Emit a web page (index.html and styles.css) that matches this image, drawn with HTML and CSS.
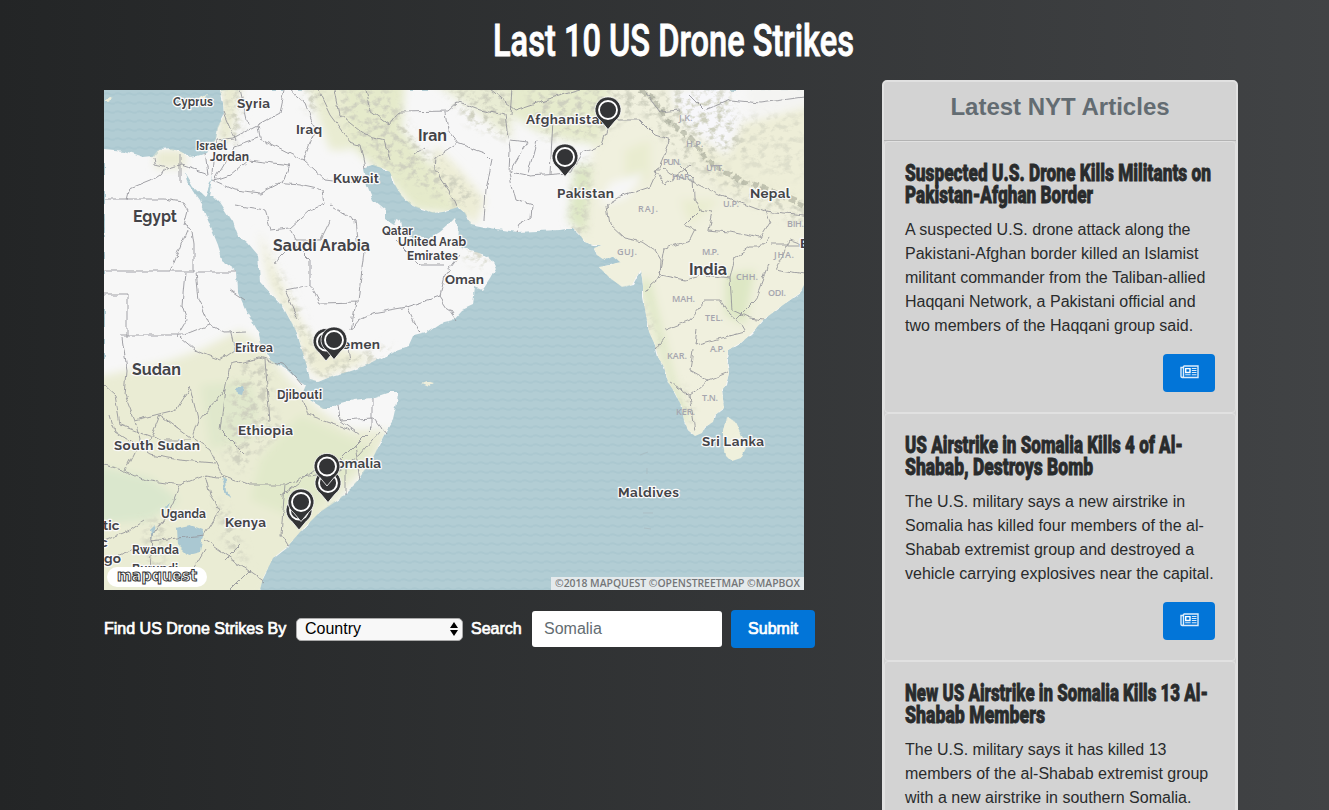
FILE: index.html
```html
<!DOCTYPE html>
<html lang="en">
<head>
<meta charset="utf-8">
<title>Last 10 US Drone Strikes</title>
<link rel="stylesheet" href="styles.css">
</head>
<body>
<header class="page-header">
  <h1 class="page-title"><svg width="362" height="56"><text x="0" y="41" textLength="361" lengthAdjust="spacingAndGlyphs">Last 10 US Drone Strikes</text></svg></h1>
</header>
<div class="layout">
<main class="main">
  <svg class="map" viewBox="104 90 700 500" width="700" height="500">
    <defs>
      <pattern id="waves" x="104" y="90" width="11" height="9" patternUnits="userSpaceOnUse">
        <rect width="11" height="9" fill="#b2cdd4"/>
        <path d="M0 4q2.7-1.600 5.500 0t5.500 0" fill="none" stroke="#abc8d0" stroke-width="2"/>
      </pattern>
      <path id="mainland" d="M104 149L125 151 143 157 153 156 158 150 172 149 182 152 187 156 197 155 207 152 215 140 217 128 224 115 223 102 220 90H804V285L800 293 783 305 763 320 752 333 742 342 728 350 727 360 729 373 726 385 722 390 724 408 715 415 713 422 705 427 702 433 695 436 688 430 684 420 682 407 675 393 668 382 664 367 658 357 655 345 649 332 643 298 643 285 641 270 636 277 632 285 622 287 610 278 599 267 610 265 620 261 607 262 597 255 594 248 602 245 593 245 585 242 580 235 573 228 560 230 537 231 517 232 490 228 470 224 465 213 458 207 443 212 433 213 413 206 402 197 395 185 390 172 382 168 372 165 363 168 367 185 373 200 385 210 385 220 393 225 395 218 400 220 402 232 410 238 430 238 440 232 448 225 455 218 458 227 457 242 463 248 477 252 488 255 492 263 496 267 490 278 482 290 475 287 473 305 462 310 453 320 440 323 425 333 413 336 408 347 390 353 373 362 360 368 345 373 330 377 318 382 310 380 307 367 302 350 297 333 282 305 260 282 258 255 247 242 238 235 233 222 220 202 213 195 209 195 213 175 205 197 194 187 185 172 187 182 200 200 207 218 218 245 223 262 237 272 238 292 247 313 258 332 262 347 270 360 287 370 300 382 306 386 302 395 313 402 323 408 333 408 338 404 353 400 372 398 390 392 398 392 397 402 393 420 383 437 373 458 357 482 340 499 320 512 300 532 287 547 273 558 263 578 260 590H104Z"/>
      <path id="lanka" d="M727 417L735 421 741 434 746 448 741 458 732 461 726 455 724 442 724 430Z"/>
      <clipPath id="land"><use href="#mainland"/><use href="#lanka"/></clipPath>
      <filter id="soft" x="-30%" y="-30%" width="160%" height="160%"><feGaussianBlur stdDeviation="4"/></filter>
      <filter id="rough" x="104" y="90" width="700" height="500" filterUnits="userSpaceOnUse">
        <feTurbulence type="fractalNoise" baseFrequency=".1" numOctaves="2" seed="4"/>
        <feDisplacementMap in="SourceGraphic" scale="6" xChannelSelector="R" yChannelSelector="G"/>
      </filter>
      <filter id="relief" x="104" y="90" width="700" height="500" filterUnits="userSpaceOnUse">
        <feGaussianBlur in="SourceGraphic" stdDeviation="4" result="area"/>
        <feTurbulence type="fractalNoise" baseFrequency=".12 .16" numOctaves="4" seed="9"/>
        <feColorMatrix values="0 0 0 0 .62  0 0 0 0 .63  0 0 0 0 .52  4 0 0 0 -1.850"/>
        <feComposite in2="area" operator="in"/>
      </filter>
      <g id="pin">
        <path d="M0 19.500L-7.500 10.500A13 13 0 1 1 7.500 10.500Z" fill="#333436" stroke="#fff" stroke-width=".8"/>
        <circle r="9" fill="#333436" stroke="#fff" stroke-width="1.900"/>
      </g>
    </defs>
    <rect x="104" y="90" width="700" height="500" fill="url(#waves)"/>
    <g filter="url(#rough)">
      <g fill="#f7f7f7"><use href="#mainland"/></g>
      <use href="#lanka" fill="#eff0dc"/>
      <path d="M422 384l5-2 7 2-5 3zM186 98l10 1 11-6-5 9-10 4zM104 101l6-4 4 1-7 4z" fill="#eeeedb"/>
    </g>
    <g clip-path="url(#land)">
      <g filter="url(#soft)" fill="#ededd6">
        <path d="M590 80H690L720 150 814 165V340L700 450H640L635 290 590 290 575 235 595 140Z" fill="#f0f0de"/>
        <path d="M690 150L735 125 814 105V215L720 190Z" fill="#eeeed8"/>
        <path d="M505 80H610L600 145 565 140 535 130 512 115Z" fill="#e6ebcd"/>
        <path d="M325 80H405L402 130 450 190 470 215 415 210 385 175 355 150 335 125Z" fill="#e5eacb"/>
        <path d="M430 80H510L512 140 480 115Z" fill="#e9ecd4"/>
        <path d="M435 145L460 170 485 200 475 225 450 200 432 170Z"/>
        <path d="M305 80H345L350 150 330 150Z" fill="#e9ecd2"/>
        <path d="M155 150H185V168H155ZM222 80L242 80 232 140 218 145Z" fill="#eaebd3"/>
        <path d="M258 230L280 280 300 320 320 350 310 375 295 330 270 285Z"/>
        <path d="M300 345L330 345 375 358 318 380Z"/>
        <path d="M94 378L165 362 200 350 240 330 262 345 285 375 320 410 350 430 390 430 380 450 300 545 260 600H94Z" fill="#eaecd4"/>
        <path d="M94 465L150 478 180 500 150 520 94 525Z" fill="#dae7cd"/>
        <path d="M200 385L250 380 260 410 250 440 210 450Z" fill="#e0e8cc"/>
        <path d="M300 415L375 450 300 520 250 500 260 460Z" fill="#e1e9ca"/>
        <path d="M575 165L592 165 585 235 568 220ZM640 280H650L675 380 690 420H680ZM725 275L755 270 745 325 725 315Z" fill="#dde7c4"/>
        <path d="M625 150L650 140 650 180 625 185ZM680 200H720L690 225Z" fill="#e9ecd0"/>
        <path d="M610 183L645 172 625 198 600 205Z" fill="#f7f7f7"/>
        <path d="M670 90L722 85 740 125 727 155 707 142 682 122Z" fill="#f7f7fa"/>
        <path d="M745 85H814V105L750 115Z" fill="#f4f4f2"/>
      </g>
      <g filter="url(#relief)" fill="#000">
        <path d="M525 90H655L700 155 760 190 804 200V225L735 195 680 160 640 110 600 135 545 140ZM660 90H730L745 155 715 160 680 135ZM725 180L804 200V218L735 198Z"/>
        <path d="M335 90H390L410 130 470 215 455 208 380 165 340 120ZM445 90H510V140L470 125ZM430 150L480 200 470 205 435 185Z"/>
        <path d="M575 160H592L585 235H570ZM230 110H245L235 145H222ZM262 240L300 310 318 360 308 372 295 325ZM245 360L270 365 272 410 285 430 255 455 240 475 225 455 230 395ZM310 370L390 345V353L325 380ZM145 520H165V580H145ZM215 500L230 510 250 570 225 545Z"/>
        <path d="M460 245L490 257 485 270 465 258ZM680 380L692 405V430L682 405ZM225 90H240V110H225ZM305 90H325V110H305ZM645 300L660 350 654 355 644 320Z"/>
        <path d="M740 115H804V180L740 170Z" opacity=".5"/>
      </g>
      <path d="M640 90L655 100 668 122 690 138 712 165 740 180 770 190 804 205" fill="none" stroke="#8f9282" stroke-opacity=".45" stroke-width="5" filter="url(#rough)" stroke-dasharray="7 3"/>
    </g>
    <g class="lakes" filter="url(#rough)">
      <path d="M177 528L190 525 204 530 200 552 188 555 178 545ZM222 478L226 480 227 492 231 499 226 496ZM236 388L243 387 241 394 237 393ZM150 530L155 525 152 540ZM165 508L170 502 168 508ZM600 262L612 256 619 262 609 264Z"/>
    </g>
    <g class="borders" filter="url(#rough)" fill="none">
      <path d="M104 199H164L183 202 188 210 184 225 192 230 194 245V271M104 271H194M196 272H237" />
      <path d="M104 295H127V337M185 272L182 305 187 320 177 337M187 230L170 271M196 272L199 300 210 325 225 333 247 332M120 335H185L210 325M127 200L130 188 150 180 168 168 181 165 208 174 205 152M180 155V182M154 158L155 165 168 168"/>
      <path d="M213 174L216 140 233 138 258 125 280 113 285 90M258 125L260 138 303 160 325 180 350 183 365 178M258 138L235 146 215 180 230 175 248 160 290 165 285 180 260 193 235 190 213 180"/>
      <path d="M224 112L236 140M240 90L248 125M290 90L305 103 315 130 303 160M318 90L330 115 350 142 360 145 365 168M335 90L340 115 365 135 385 140 390 160M365 90L370 110 390 125 400 112 448 111 458 102 480 110 505 115 510 150 509 173 516 200 532 205 531 218 519 225 516 232"/>
      <path d="M445 112L448 130 457 143 485 153 492 160 486 190 484 220M457 143L436 157 435 170 452 195 457 207M415 155L425 148M510 140L528 142 510 172 530 176 570 173 583 153 602 145 610 120 640 120 655 135 670 140 662 160 650 187 620 197 607 205 610 225 624 238 643 242 655 250 661 260 660 277 650 285 646 292M537 140L528 173M553 120L550 174M512 90L510 115M490 90L515 110 545 100 580 90"/>
      <path d="M235 205L265 210 271 230 290 228 310 210 325 205 323 190 300 185 275 183M290 230L295 240 320 240 330 220M295 245L310 260 310 285 320 303 358 302 364 250M290 245L280 255 275 265M355 302L350 330 358 320 372 313 407 307 440 296 445 275 460 255M407 307L419 333M440 296L456 320M445 265H420L395 240M330 205L355 220 358 250M310 285L285 290 298 320"/>
      <path d="M122 337L127 370 125 395 135 420 175 410 188 390 190 387 198 420 192 437 210 450 222 475 250 485 285 485 300 478 340 470 360 455 380 432M180 337L195 350 220 360 235 350 230 330M200 420L225 390 230 365 260 358 285 365 302 385M265 360L270 422M225 390L220 430 245 455M104 385L115 395 120 425 160 440 190 440M104 465L122 470 145 480 180 485 205 475 225 478M110 415L115 432 150 455 180 460 215 463M125 470L140 440 135 420M190 437L160 415 150 440M205 475L210 495 220 510 204 535 150 541M180 485L170 510 152 535 150 575M204 540L265 582M285 485L281 535 288 546M302 396L308 415 350 430M338 404L340 420 360 435M372 398V428L330 470M340 420L374 418M374 418L386 434"/>
      <path d="M662 168L670 175 690 180 720 195 765 212 804 216M660 170L655 170 665 185 690 165M680 165L693 178 694 198 700 210 712 212 708 230 730 232 760 238 770 222 765 210M770 245H804M700 210L685 225 695 230 690 240 665 248 660 275 685 280 705 275 730 278 735 258 750 247 760 247 770 235M665 330L690 320 705 300 720 300 730 315 742 325 745 330M730 278L732 310 750 318 763 320M768 265L755 300 735 320M665 338L655 350M697 330L695 345 745 332M693 350L690 370 708 380 697 390 690 395 670 383M708 380L728 372M690 395L695 432M804 245L790 240 775 270 804 275M645 92L660 112 680 110M690 95L705 110 730 100 760 103 804 97"/>
      <path d="M230 290L245 300M240 545L225 560M205 550L190 575M250 570L230 590M104 540L130 530 145 520M110 560L145 545M350 360L345 330M419 333L418 330M345 468V495M355 445L360 480M282 495L315 470"/>
    </g>
    <g class="regions">
      <text x="663" y="165" textLength="18">PUN.</text><text x="672" y="180" textLength="20">HAR.</text><text x="706" y="171" textLength="18">UTT.</text><text x="679" y="121">J.K.</text><text x="686" y="147">H.P.</text><text x="638" y="212" textLength="20">RAJ.</text><text x="723" y="207" textLength="16">U.P.</text><text x="787" y="227" textLength="17">BIH.</text><text x="617" y="255" textLength="20">GUJ.</text><text x="702" y="255" textLength="17">M.P.</text><text x="774" y="258" textLength="20">JHA.</text><text x="736" y="280" textLength="22">CHH.</text><text x="768" y="296" textLength="18">ODI.</text><text x="672" y="302" textLength="23">MAH.</text><text x="705" y="321" textLength="18">TEL.</text><text x="667" y="359" textLength="20">KAR.</text><text x="710" y="352" textLength="15">A.P.</text><text x="702" y="401" textLength="16">T.N.</text><text x="676" y="415" textLength="19">KER.</text>
    </g>
    <g class="countries">
      <g class="small">
        <text x="173" y="106" textLength="40">Cyprus</text><text x="196" y="150" textLength="31">Israel</text><text x="210" y="161" textLength="39">Jordan</text><text x="382" y="235" textLength="31">Qatar</text><text x="398" y="246" textLength="68">United Arab</text><text x="407" y="260" textLength="51">Emirates</text><text x="235" y="352" textLength="38">Eritrea</text><text x="277" y="399" textLength="45">Djibouti</text><text x="161" y="518" textLength="45">Uganda</text><text x="132" y="554" textLength="47">Rwanda</text><text x="132" y="573" textLength="46">Burundi</text>
      </g>
      <text x="237" y="108" textLength="33">Syria</text><text x="296" y="134" textLength="26">Iraq</text><text x="333" y="183" textLength="46">Kuwait</text><text x="526" y="124" textLength="82">Afghanistan</text><text x="557" y="198" textLength="57">Pakistan</text><text x="750" y="198" textLength="40">Nepal</text><text x="445" y="284" textLength="39">Oman</text><text x="334" y="349" textLength="46">Yemen</text><text x="238" y="435" textLength="55">Ethiopia</text><text x="114" y="450" textLength="86">South Sudan</text><text x="328" y="468" textLength="53">Somalia</text><text x="225" y="527" textLength="41">Kenya</text><text x="702" y="446" textLength="62">Sri Lanka</text><text x="618" y="497" textLength="61">Maldives</text><text x="103" y="530">tic</text><text x="100" y="547">c</text><text x="104" y="563" textLength="17">go</text><text x="800" y="248">B</text>
      <g class="large"><text x="418" y="141" textLength="29">Iran</text><text x="133" y="222" textLength="44">Egypt</text><text x="273" y="251" textLength="97">Saudi Arabia</text><text x="689" y="275" textLength="38">India</text><text x="132" y="375" textLength="49">Sudan</text></g>
    </g>
    <path d="M640 455l8-3M647 468v6M643 513h10M644 528l7 1" stroke="#a9b9bf" stroke-width=".7"/>
    <use href="#pin" x="608" y="110"/><use href="#pin" x="565" y="157"/>
    <use href="#pin" x="326" y="341.500"/><use href="#pin" x="334" y="340"/>
    <use href="#pin" x="328" y="483"/><use href="#pin" x="327" y="466.500"/>
    <use href="#pin" x="299" y="510.500"/><use href="#pin" x="301" y="502"/>
    <rect x="107" y="567" width="100" height="20" rx="10" fill="#fff"/>
    <text class="brand" x="117" y="581" textLength="80" lengthAdjust="spacingAndGlyphs">mapquest</text>
    <rect x="551" y="577" width="253" height="13" fill="#e7ebed" fill-opacity=".95"/>
    <text class="credit" x="555" y="587" textLength="245" lengthAdjust="spacingAndGlyphs">©2018 MAPQUEST ©OPENSTREETMAP ©MAPBOX</text>
  </svg>
  <form class="search">
    <span class="label label-by">Find US Drone Strikes By</span>
    <span class="select" role="listbox">Country
      <svg width="8" height="14" viewBox="0 0 8 14"><path d="M0 6L4 0 8 6ZM0 8H8L4 14Z" fill="#000"/></svg>
    </span>
    <span class="label label-search">Search</span>
    <input class="query" type="text" placeholder="Somalia">
    <button class="submit" type="button">Submit</button>
  </form>
</main>
<aside class="articles">
  <h2 class="articles-title">Latest NYT Articles</h2>
  <svg class="sprite" width="0" height="0"><symbol id="news" viewBox="0 0 19 14"><path d="M3.500 1H18V12.500H2.200Q1 12.500 1 11V2.500H3.500M3.500 1V11Q3.500 12.500 2.200 12.500" fill="none" stroke="#dcecfa" stroke-width="1.400"/><path d="M5.700 3.600H10V7.500H5.700Z" fill="none" stroke="#fff" stroke-width="1.400"/><path d="M11.800 3.500H16.500M11.800 5.500H16.500M11.800 7.500H16.500M5.200 9.700H10.600M11.800 9.700H16.500" stroke="#dcecfa" stroke-width="1.100"/></symbol></svg>
  <article class="card">
    <h3 class="card-title"><svg width="312" height="44"><text x="0" y="18" textLength="306" lengthAdjust="spacingAndGlyphs">Suspected U.S. Drone Kills Militants on</text><text x="0" y="40" textLength="188" lengthAdjust="spacingAndGlyphs">Pakistan-Afghan Border</text></svg></h3>
    <p class="summary">A suspected U.S. drone attack along the<br>Pakistani-Afghan border killed an Islamist<br>militant commander from the Taliban-allied<br>Haqqani Network, a Pakistani official and<br>two members of the Haqqani group said.</p>
    <a class="read"><svg width="19" height="14"><use href="#news"/></svg></a>
  </article>
  <article class="card">
    <h3 class="card-title"><svg width="312" height="44"><text x="0" y="18" textLength="278" lengthAdjust="spacingAndGlyphs">US Airstrike in Somalia Kills 4 of Al-</text><text x="0" y="40" textLength="188" lengthAdjust="spacingAndGlyphs">Shabab, Destroys Bomb</text></svg></h3>
    <p class="summary">The U.S. military says a new airstrike in<br>Somalia has killed four members of the al-<br>Shabab extremist group and destroyed a<br>vehicle carrying explosives near the capital.</p>
    <a class="read"><svg width="19" height="14"><use href="#news"/></svg></a>
  </article>
  <article class="card">
    <h3 class="card-title"><svg width="312" height="44"><text x="0" y="18" textLength="303" lengthAdjust="spacingAndGlyphs">New US Airstrike in Somalia Kills 13 Al-</text><text x="0" y="40" textLength="140" lengthAdjust="spacingAndGlyphs">Shabab Members</text></svg></h3>
    <p class="summary">The U.S. military says it has killed 13<br>members of the al-Shabab extremist group<br>with a new airstrike in southern Somalia.</p>
  </article>
</aside>
</div>
</body>
</html>
```
FILE: styles.css
```css
* { box-sizing: border-box; }
html { height: 100%; overflow: hidden; }
body {
  margin: 0;
  height: 100%;
  overflow: hidden;
  font: 16px/24px "Liberation Sans", Arial, sans-serif;
  color: #292b2c;
  background: linear-gradient(to right, #232526, #414345);
}
svg { display: block; }
svg text { white-space: pre; }
.page-header { height: 80px; padding: 15px 0 0 493px; }
.page-title { margin: 0; font: 500 44.5px Roboto, sans-serif; }
.page-title svg { overflow: visible; }
.page-title text { fill: #fff; stroke: #fff; stroke-width: .9px; }
.layout { display: flex; align-items: flex-start; padding-left: 104px; }
.main { width: 778px; padding-top: 10px; flex: none; }
.map { overflow: hidden; }
.lakes { fill: #aac8d2; }
.borders { stroke: #929298; stroke-width: .85; stroke-linejoin: round; }
.regions { font: 600 9px "Open Sans", sans-serif; fill: #a5a5ae; }
.countries {
  font: 700 13.5px Raleway, Lato, sans-serif;
  fill: #444448;
  stroke: #fafafa;
  stroke-width: 2.5px;
  stroke-linejoin: round;
  paint-order: stroke;
}
.small { font-size: 12px; }
.large { font-size: 16px; }
.brand { font: 700 15px "DejaVu Sans", sans-serif; fill: #fff; stroke: #333; stroke-width: 1px; }
.credit { font: 600 10px "Open Sans", sans-serif; fill: #747678; }
.search { display: flex; align-items: center; height: 38px; margin-top: 20px; }
.label { color: #fff; -webkit-text-stroke: .7px #fff; white-space: nowrap; flex: none; }
.label-by { width: 192px; }
.label-search { width: 61px; margin-left: 8px; }
.select {
  display: flex;
  align-items: center;
  justify-content: space-between;
  width: 167px;
  height: 23px;
  padding: 0 4px 0 8px;
  border: 1px solid #aaa;
  border-radius: 5px;
  background: #f8f8f8;
  color: #000;
}
.query {
  width: 190px;
  height: 36px;
  padding: 0 12px;
  border: 0;
  border-radius: 3px;
  background: #fff;
  font: inherit;
}
.query::placeholder { color: #636c72; opacity: 1; }
.submit {
  width: 84px;
  height: 38px;
  margin-left: 9px;
  padding: 0;
  border: 0;
  border-radius: 4px;
  background: #0275d8;
  color: #fff;
  font: inherit;
  -webkit-text-stroke: .7px #fff;
}
.articles { width: 356px; flex: none; border: 2px solid #e1e1e1; border-radius: 5px; background: #d3d3d3; }
.articles-title {
  height: 59px;
  margin: 0;
  padding-top: 10px;
  border-bottom: 1px solid #b3b3b3;
  color: #636c72;
  font-size: 24px;
  line-height: 29px;
  text-align: center;
}
.sprite { position: absolute; }
.card { padding: 21px 20px 20px; border: 1px solid #e1e1e1; border-radius: 4px; }
.card-title { margin: 0 0 11px; font: 900 24px Roboto, sans-serif; }
.card-title svg { overflow: visible; }
.card-title text { fill: #292b2c; stroke: #292b2c; stroke-width: .8px; }
.summary { margin: 0 0 16px; white-space: nowrap; }
.read {
  display: flex;
  align-items: center;
  justify-content: center;
  width: 52px;
  height: 38px;
  padding-bottom: 3px;
  margin-left: auto;
  border-radius: 4px;
  background: #0275d8;
}
```
